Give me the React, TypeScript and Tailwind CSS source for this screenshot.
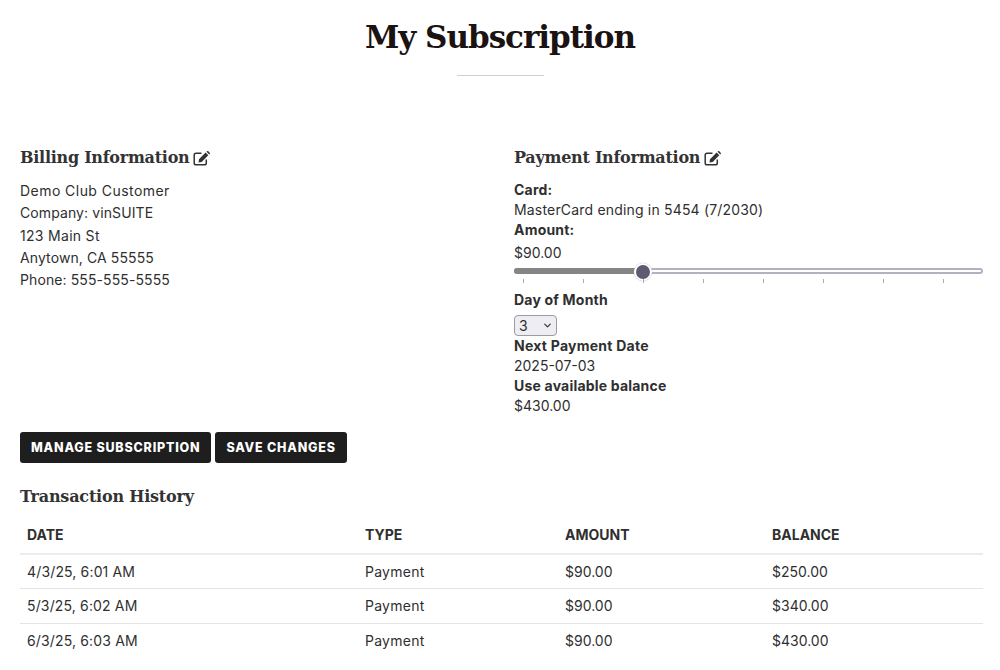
import { LuChevronDown } from "react-icons/lu";

const SLAB = "font-['DejaVu_Serif',serif] font-bold";
const transactions = [
  { date: "4/3/25, 6:01 AM", type: "Payment", amount: "$90.00", balance: "$250.00" },
  { date: "5/3/25, 6:02 AM", type: "Payment", amount: "$90.00", balance: "$340.00" },
  { date: "6/3/25, 6:03 AM", type: "Payment", amount: "$90.00", balance: "$430.00" },
];

function EditIcon() {
  return (
    <svg viewBox="0 0 18 15" className="h-[15px] w-[18px]">
      <path d="M8.5 2.2H3a1.8 1.8 0 0 0-1.8 1.8v8a1.8 1.8 0 0 0 1.8 1.8h8.5a1.8 1.8 0 0 0 1.8-1.8V8.5" fill="none" stroke="#333" strokeWidth="1.5" />
      <path d="M6 8.2 12.6 1.6l2.7 2.7-6.6 6.6-3.2.5zM13.5.8l.6-.5c.4-.3.9-.3 1.2 0l1.4 1.4c.3.4.3.9 0 1.2l-.5.6z" fill="#333" />
    </svg>
  );
}

function SectionTitle({ label }: { label: string }) {
  return (
    <h2 className={`${SLAB} flex items-center gap-[4px] text-[16px] leading-[24px] tracking-[-0.26px] text-[#333]`}>
      {label}
      <EditIcon />
    </h2>
  );
}

function Slider() {
  return (
    <div className="relative mt-px h-[26px] w-[469px]">
      <div className="absolute left-0 top-[4px] h-[6px] w-full rounded-full border-2 border-[#b4b0c2] bg-white" />
      <div className="absolute left-0 top-[4px] h-[6px] w-[129px] rounded-l-full bg-[#858585]" />
      <div className="absolute left-[120px] top-[-1px] h-[18px] w-[18px] rounded-full border-2 border-white bg-[#5b5b72] shadow-[0_0_1px_#999]" />
      <div className="absolute left-[9px] top-[15px] flex gap-[59px]">
        {[0, 1, 2, 3, 4, 5, 6, 7].map((i) => (
          <span key={i} className="h-[4px] w-px bg-[#aaaaaa]" />
        ))}
      </div>
    </div>
  );
}

export default function App() {
  return (
    <div className="h-[670px] overflow-hidden bg-white font-['Inter',sans-serif] text-[14px] text-[#2f2f2f]">
      <div className="pt-[13px] text-center">
        <h1 className={`${SLAB} text-[31px] leading-[48px] tracking-[-1px] text-[#1b1212]`}>My Subscription</h1>
        <div className="mx-auto mt-[14px] h-px w-[87px] bg-[#cfcfcf]" />
      </div>

      <div className="mt-[70px] flex px-[20px]">
        <div className="w-[494px] shrink-0">
          <SectionTitle label="Billing Information" />
          <div className="mt-[10px] leading-[22.3px] tracking-[0.1px]">
            <p className="tracking-[0.45px]">Demo Club Customer</p>
            <p>Company: vinSUITE</p>
            <p className="tracking-[0.3px]">123 Main St</p>
            <p>Anytown, CA 55555</p>
            <p>Phone: 555-555-5555</p>
          </div>
        </div>
        <div className="w-[469px] shrink-0 leading-[20px]">
          <SectionTitle label="Payment Information" />
          <div className="mt-[10px]">
            <p className="font-bold tracking-[0.2px]">Card:</p>
            <p className="tracking-[0.18px]">MasterCard ending in 5454 (7/2030)</p>
            <p className="font-bold tracking-[0.2px]">Amount:</p>
            <p className="mt-[3px]">$90.00</p>
          </div>
          <Slider />
          <p className="font-bold tracking-[0.2px]">Day of Month</p>
          <div className="relative mt-[5px] h-[21px] w-[43px] rounded-[4px] border border-[#9a9aa8] bg-[#eeeef2] pl-[4px] text-[14px] leading-[19px]">
            3
            <LuChevronDown className="absolute right-[3px] top-[4px] h-[11px] w-[11px]" strokeWidth={2.5} />
          </div>
          <p className="font-bold tracking-[0.25px]">Next Payment Date</p>
          <p>2025-07-03</p>
          <p className="font-bold tracking-[0.2px]">Use available balance</p>
          <p>$430.00</p>
        </div>
      </div>

      <div className="mt-[16px] flex gap-[4px] px-[20px]">
        <button className="h-[31px] rounded-[3px] bg-[#1e1e1e] px-[11px] pt-px text-[12.5px] font-extrabold tracking-[0.8px] text-white">
          MANAGE SUBSCRIPTION
        </button>
        <button className="h-[31px] rounded-[3px] bg-[#1e1e1e] px-[11px] pt-px text-[12.5px] font-extrabold tracking-[0.8px] text-white">
          SAVE CHANGES
        </button>
      </div>

      <div className="px-[20px]">
        <h2 className={`${SLAB} mt-[22px] text-[16px] leading-[24px] tracking-[-0.2px] text-[#333]`}>Transaction History</h2>
        <table className="mt-[5px] w-[963px] table-fixed text-left">
          <thead>
            <tr className="h-[40px] border-b-2 border-[#ececec] font-extrabold">
              <th className="w-[338px] pl-[7px] pt-[2px]">DATE</th>
              <th className="w-[200px] pl-[7px] pt-[2px]">TYPE</th>
              <th className="w-[207px] pl-[7px] pt-[2px]">AMOUNT</th>
              <th className="pl-[7px] pt-[2px]">BALANCE</th>
            </tr>
          </thead>
          <tbody>
            {transactions.map((t) => (
              <tr key={t.date} className="h-[34.5px] border-b border-[#e4e4e4] last:border-b-0">
                <td className="pl-[7px] tracking-[0.15px]">{t.date}</td>
                <td className="pl-[7px] tracking-[0.25px]">{t.type}</td>
                <td className="pl-[7px]">{t.amount}</td>
                <td className="pl-[7px]">{t.balance}</td>
              </tr>
            ))}
          </tbody>
        </table>
      </div>
    </div>
  );
}
